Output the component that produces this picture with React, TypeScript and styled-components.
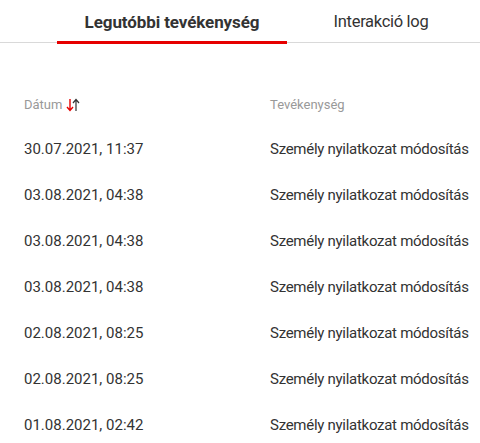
import React, { FC } from 'react'
import styled, { createGlobalStyle } from 'styled-components'

const GlobalStyle = createGlobalStyle`
  body {
    margin: 0;
    background: #ffffff;
    font-family: Roboto, 'Noto Sans', sans-serif;
    color: #333333;
  }
`

const Page = styled.div`
  width: 480px;
  height: 443px;
  overflow: hidden;
`
const TabBar = styled.div`
  display: flex;
  height: 42px;
  border-bottom: 1px solid #d9d9d9;
  padding-left: 57px;
`
const Tab = styled.div<{ $active?: boolean }>`
  position: relative;
  width: ${(p) => (p.$active ? '230px' : '188px')};
  text-align: center;
  font-size: ${(p) => (p.$active ? '17px' : '16.5px')};
  line-height: 44px;
  font-weight: ${(p) => (p.$active ? 700 : 400)};
  letter-spacing: ${(p) => (p.$active ? '-0.1px' : '-0.3px')};
  color: #333333;
  ${(p) =>
    p.$active &&
    `
    &::after {
      content: '';
      position: absolute;
      left: 0;
      right: 0;
      bottom: -2px;
      height: 3px;
      background: #e60000;
    }
  `}
`
const Table = styled.div`
  padding: 40px 0 0 24px;
`
const Row = styled.div<{ $head?: boolean }>`
  display: grid;
  grid-template-columns: 246px 1fr;
  height: ${(p) => (p.$head ? '43px' : '46px')};
  align-items: center;
  font-size: ${(p) => (p.$head ? '13px' : '15px')};
  color: ${(p) => (p.$head ? '#999999' : '#333333')};
  white-space: nowrap;
`
const HeadCell = styled.div`
  display: flex;
  align-items: center;
  gap: 4px;
`
const Activity = styled.div`
  letter-spacing: -0.28px;
`

const SortIcon: FC = () => (
  <svg width="14" height="16" viewBox="0 0 14 16" fill="none">
    <path d="M4 2v11M1 10l3 3.5L7 10" stroke="#e60000" strokeWidth="1.4" />
    <path d="M10 14V3M7 6l3-3.5L13 6" stroke="#333333" strokeWidth="1.2" />
  </svg>
)

const rows = [
  '30.07.2021, 11:37',
  '03.08.2021, 04:38',
  '03.08.2021, 04:38',
  '03.08.2021, 04:38',
  '02.08.2021, 08:25',
  '02.08.2021, 08:25',
  '01.08.2021, 02:42',
]

export default function App(): JSX.Element {
  return (
    <Page>
      <GlobalStyle />
      <TabBar>
        <Tab $active>Legutóbbi tevékenység</Tab>
        <Tab>Interakció log</Tab>
      </TabBar>
      <Table>
        <Row $head>
          <HeadCell>
            Dátum <SortIcon />
          </HeadCell>
          <div>Tevékenység</div>
        </Row>
        {rows.map((d, i) => (
          <Row key={i}>
            <div>{d}</div>
            <Activity>Személy nyilatkozat módosítás</Activity>
          </Row>
        ))}
      </Table>
    </Page>
  )
}
